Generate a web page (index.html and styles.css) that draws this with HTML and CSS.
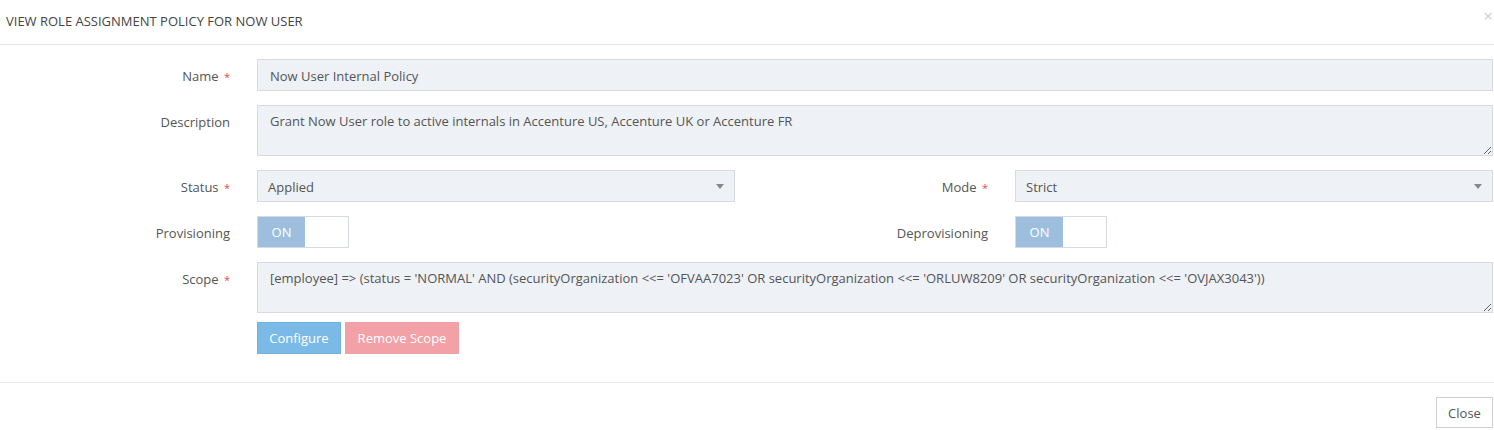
FILE: index.html
```html
<!DOCTYPE html>
<html lang="en">
<head>
    <meta charset="UTF-8">
    <meta name="viewport" content="width=device-width, initial-scale=1.0">
    <title>View role assignment policy</title>
    <link rel="stylesheet" href="styles.css">
</head>
<body>
<div class="modal">
    <div class="modal-header">
        <h4 class="modal-title">VIEW ROLE ASSIGNMENT POLICY FOR NOW USER</h4>
        <span class="close">&times;</span>
    </div>

    <form class="modal-body">
        <label class="form-label" for="name">Name <span class="req">*</span></label>
        <input class="form-control wide" id="name" type="text" value="Now User Internal Policy" readonly>

        <label class="form-label" for="description">Description</label>
        <textarea class="form-control wide area" id="description" readonly>Grant Now User role to active internals in Accenture US, Accenture UK or Accenture FR</textarea>

        <label class="form-label" for="status">Status <span class="req">*</span></label>
        <div class="form-control select" id="status">Applied<span class="caret"></span></div>
        <label class="form-label" for="mode">Mode <span class="req">*</span></label>
        <div class="form-control select" id="mode">Strict<span class="caret"></span></div>

        <label class="form-label">Provisioning</label>
        <div class="switch"><span class="switch-on">ON</span><span class="switch-off"></span></div>
        <label class="form-label">Deprovisioning</label>
        <div class="switch"><span class="switch-on">ON</span><span class="switch-off"></span></div>

        <label class="form-label" for="scope">Scope <span class="req">*</span></label>
        <textarea class="form-control wide area" id="scope" readonly>[employee] =&gt; (status = 'NORMAL' AND (securityOrganization &lt;&lt;= 'OFVAA7023' OR securityOrganization &lt;&lt;= 'ORLUW8209' OR securityOrganization &lt;&lt;= 'OVJAX3043'))</textarea>

        <div class="scope-actions">
            <button type="button" class="btn btn-info">Configure</button>
            <button type="button" class="btn btn-danger">Remove Scope</button>
        </div>
    </form>

    <div class="modal-footer">
        <button type="button" class="btn btn-default">Close</button>
    </div>
</div>
</body>
</html>
```

FILE: styles.css
```css
body {
    font-family: "Open Sans", "Liberation Sans", sans-serif;
    font-size: 13px;
    color: #555;
    background-color: #fff;
    margin: 0;
}

.modal {
    width: 1494px;
}

.modal-header {
    height: 45px;
    border-bottom: 1px solid #e8e8e8;
    display: flex;
    align-items: center;
    justify-content: space-between;
    padding: 0 0 0 6px;
    box-sizing: border-box;
}

.modal-title {
    margin: 0 0 2px 0;
    font-size: 13px;
    font-weight: normal;
    color: #444;
}

.close {
    color: #d0d0d0;
    font-size: 17px;
    line-height: 17px;
    margin: 0 1px 14px 0;
}

.modal-body {
    display: grid;
    grid-template-columns: 230px 478px 226px 478px;
    column-gap: 27px;
    row-gap: 14px;
    padding: 14px 0 28px 0;
    width: 1493px;
}

.form-label {
    text-align: right;
    padding-top: 8px;
    line-height: 18px;
    color: #555;
}

.req {
    color: #e24a4a;
    font-size: 11px;
    margin-left: 2px;
}

.form-control {
    height: 32px;
    box-sizing: border-box;
    background-color: #eef1f5;
    border: 1px solid #d6dbe1;
    color: #555;
    font-family: inherit;
    font-size: 13px;
    padding: 7px 12px 6px 12px;
    margin: 0;
    outline: none;
}

.wide {
    grid-column: 2 / 5;
}

.area {
    height: 51px;
    resize: vertical;
    line-height: 18px;
    padding-top: 6px;
}

.select {
    position: relative;
    padding-left: 10px;
    line-height: 18px;
}

.caret {
    position: absolute;
    right: 10px;
    top: 13px;
    border-left: 4px solid transparent;
    border-right: 4px solid transparent;
    border-top: 5px solid #888;
}

.switch {
    display: flex;
    width: 92px;
    height: 32px;
    box-sizing: border-box;
    border: 1px solid #d6dbe1;
}

.switch-on {
    width: 47px;
    background-color: #9dbfdd;
    color: #fff;
    text-align: center;
    line-height: 31px;
}

.switch-off {
    flex: 1;
    background-color: #fff;
}

.scope-actions {
    grid-column: 2 / 5;
    display: flex;
    gap: 4px;
    margin-top: -5px;
}

.btn {
    height: 32px;
    padding: 0 8px;
    border: 1px solid transparent;
    font-family: inherit;
    font-size: 13px;
    color: #fff;
    white-space: nowrap;
    cursor: pointer;
}

.btn-info {
    background-color: #7bbae6;
    border-color: #6fb2e2;
    width: 84px;
}

.btn-danger {
    background-color: #f2a1a6;
    border-color: #eda0a6;
    width: 114px;
}

.modal-footer {
    border-top: 1px solid #e8e8e8;
    display: flex;
    justify-content: flex-end;
    padding: 14px 1px 0 0;
}

.btn-default {
    background-color: #fff;
    border-color: #d0d0d0;
    color: #555;
    width: 57px;
    height: 31px;
    padding: 0;
}
```
